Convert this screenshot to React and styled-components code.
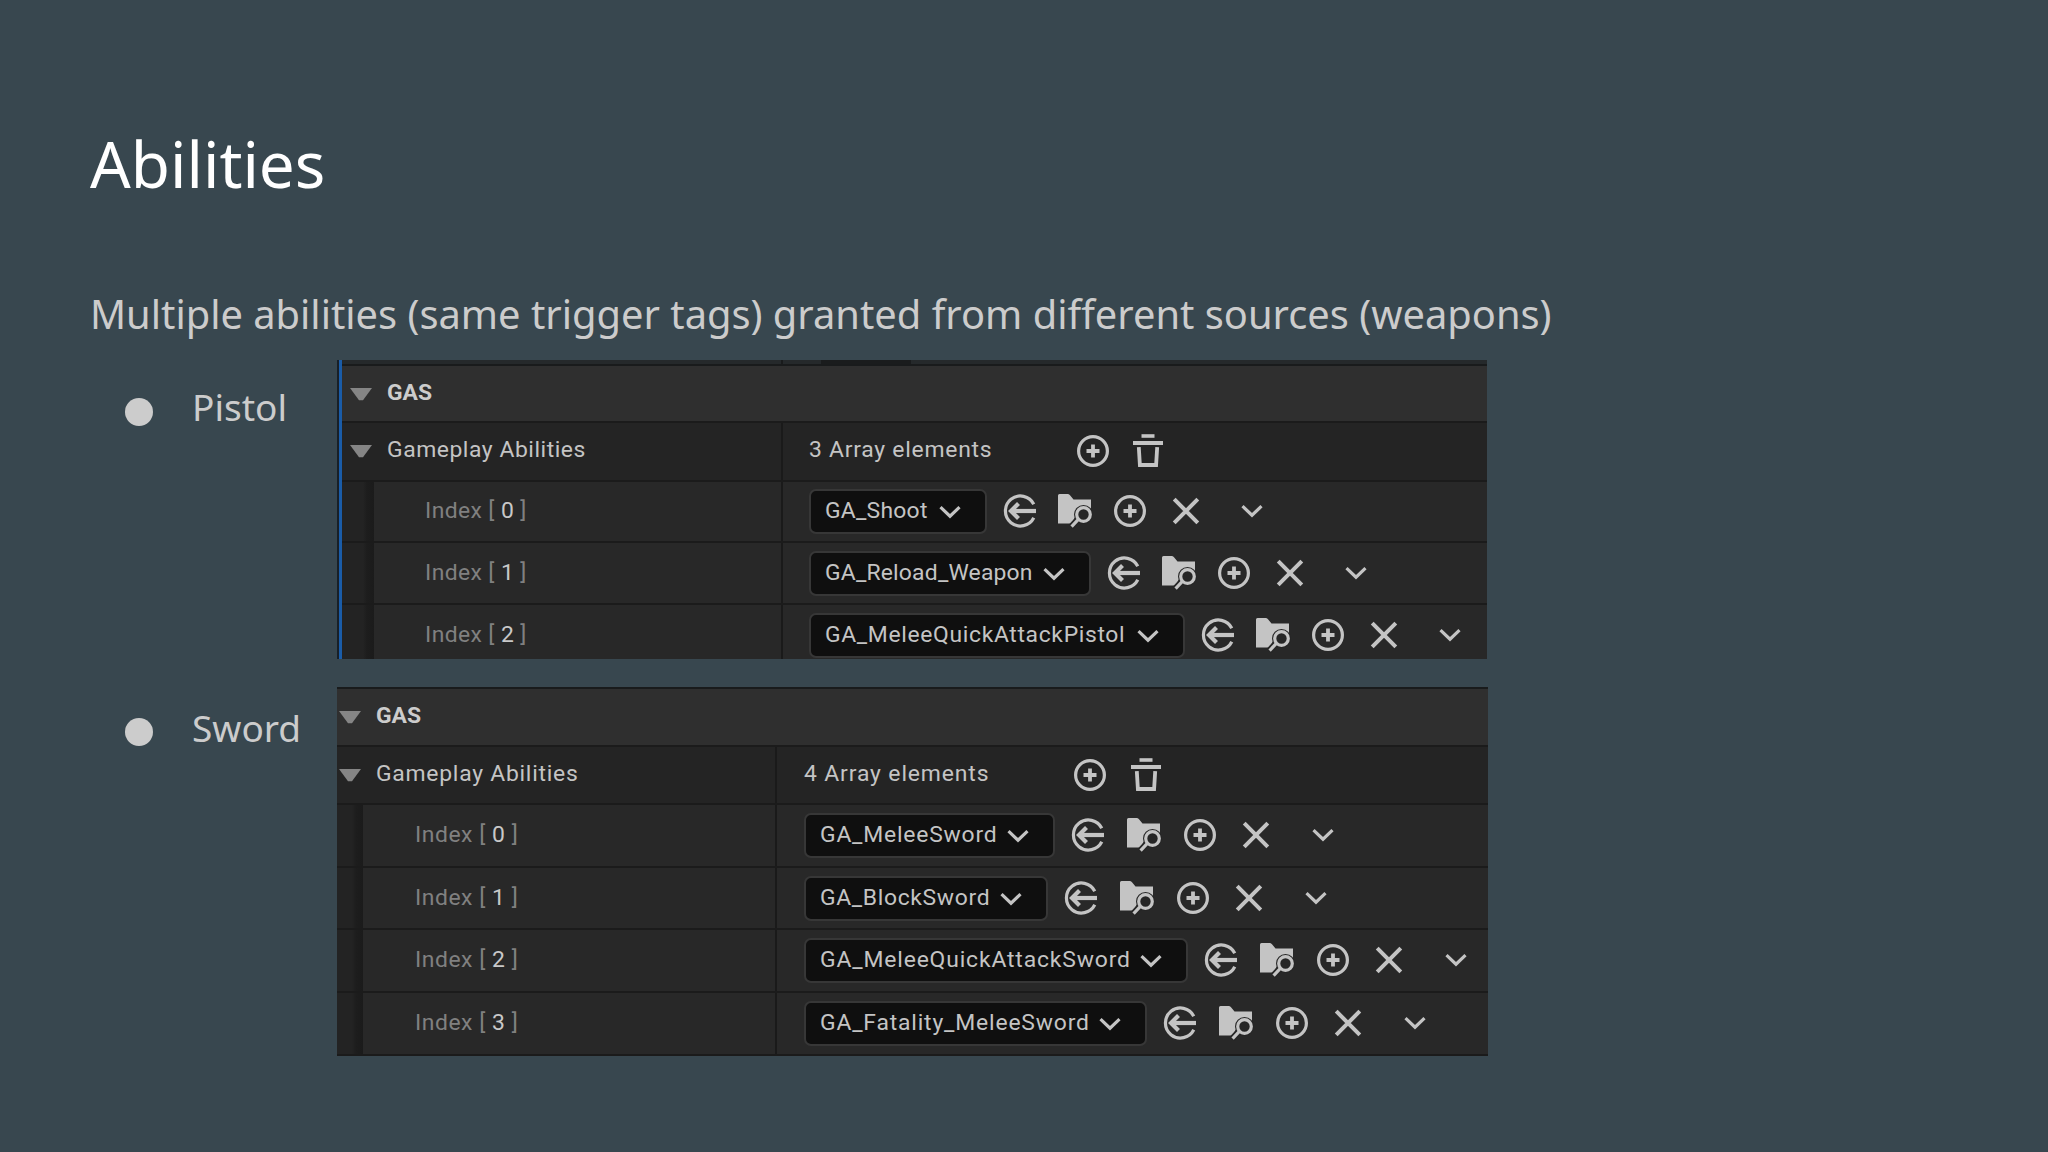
import React from 'react';
import styled, { createGlobalStyle } from 'styled-components';

const GlobalStyle = createGlobalStyle`
    body {
        margin: 0;
        background-color: #38474f;
    }
    * {
        box-sizing: border-box;
    }
`;

const Slide = styled.main`
    width: 2048px;
    height: 1152px;
    padding: 114px 90px 0;
    overflow: hidden;
    background-color: #38474f;
    font-family: 'Noto Sans', sans-serif;
    color: #cccccc;
`;

const Title = styled.h1`
    margin: 0;
    font-size: 63.8px;
    font-weight: 400;
    line-height: 100px;
    color: white;
`;

const Lead = styled.p`
    margin: 71px 0 0;
    height: 75px;
    font-size: 39.83px;
    line-height: 58px;
    white-space: nowrap;
`;

const List = styled.ul`
    margin: 0;
    padding: 0;
    display: flex;
    flex-direction: column;
    gap: 28px;
    list-style: none;
`;

const Item = styled.li`
    display: flex;
    align-items: flex-start;
    padding-left: 35px;
`;

const Bullet = styled.span`
    flex: none;
    width: 28px;
    height: 28px;
    margin-top: ${props => props.$top}px;
    border-radius: 50%;
    background-color: #cccccc;
`;

const Label = styled.span`
    width: 145px;
    margin: ${props => props.$top}px 0 0 39px;
    font-size: 37px;
    line-height: 54px;
`;

const Panel = styled.section`
    display: flex;
    flex-direction: column;
    width: ${props => props.$width}px;
    height: ${props => props.$height}px;
    overflow: hidden;
    border-left: ${props => (props.$selected ? '3px solid #1a5ca8' : 'none')};
    box-shadow: ${props => (props.$selected ? '-2px 0 0 #182028' : 'none')};
    margin-left: ${props => (props.$selected ? 2 : 0)}px;
    background-color: #262626;
    font-family: Roboto, sans-serif;
    font-size: 22.9px;
    line-height: 44px;
    color: #c4c4c4;
`;

const TopEdge = styled.div`
    display: flex;
    flex: none;
    height: ${props => props.$height}px;
    border-bottom: 2px solid #191b1c;
    background-color: #25292b;
`;

const EdgeCell = styled.div`
    width: ${props => props.$width}px;
    border-right: 2px solid #191b1c;
`;

const EdgeShade = styled.div`
    width: 90px;
    margin-left: 38px;
    background-color: #1a1c1d;
`;

const Row = styled.div`
    display: flex;
    flex: none;
    height: ${props => props.$height}px;
    border-bottom: 2px solid #1b1b1b;
    background-color: ${props => props.$bg || '#242424'};
`;

const NameCell = styled.div`
    display: flex;
    align-items: flex-start;
    flex: none;
    width: ${props => props.$width}px;
    padding: 6px 0 0 ${props => props.$left}px;
    border-right: ${props => (props.$plain ? 'none' : '2px solid #1a1a1a')};
`;

const Gutter = styled.div`
    flex: none;
    width: ${props => props.$width}px;
    background: linear-gradient(to right, #232323 0, #232323 calc(100% - 11px), #1d1d1d calc(100% - 7px), #1b1b1b 100%);
`;

const IndexCell = styled.div`
    flex: none;
    width: ${props => props.$width}px;
    padding: ${props => props.$top}px 0 0 ${props => props.$left}px;
    border-right: 2px solid #1a1a1a;
    color: #808080;
    letter-spacing: ${props => props.$spacing}px;
    white-space: pre;
`;

const IndexNumber = styled.span`
    color: #c8c8c8;
`;

const ValueCell = styled.div`
    display: flex;
    align-items: flex-start;
    padding: ${props => props.$top}px 0 0 ${props => props.$left}px;
`;

const Text = styled.span`
    margin-top: -1px;
    font-weight: ${props => (props.$bold ? 700 : 400)};
    color: ${props => (props.$bold ? '#cccccc' : '#c4c4c4')};
    letter-spacing: ${props => props.$spacing || 0}px;
    white-space: nowrap;
`;

const Count = styled(Text)`
    width: ${props => props.$width}px;
`;

const Combo = styled.div`
    display: flex;
    align-items: center;
    justify-content: space-between;
    flex: none;
    width: ${props => props.$width}px;
    height: 45px;
    padding: 0 24px 0 14px;
    border: 2px solid #373737;
    border-radius: 7px;
    background-color: #0f0f0f;
    white-space: nowrap;
    letter-spacing: ${props => props.$spacing || 0}px;
`;

const ComboText = styled.span`
    margin-top: -2px;
`;

const Tools = styled.div`
    display: flex;
    align-items: center;
    height: 44px;
    margin-left: ${props => props.$left || 0}px;
`;

const IconSlot = styled.div`
    display: flex;
    justify-content: center;
    width: ${props => props.$width}px;
`;

const Icon = styled.svg`
    display: block;
    flex: none;
    fill: none;
    stroke: #c4c4c4;
    stroke-width: 3.2;
`;

const Triangle = styled.svg`
    flex: none;
    width: 22px;
    height: 13px;
    margin: 16px 15px 0 0;
    fill: #858585;
`;

const Expander = () => (
    <Triangle viewBox='0 0 22 13'><path d='M0 0H22L13 12.3H9Z' /></Triangle>
);

const Chevron = () => (
    <Icon width='22' height='14' viewBox='0 0 22 14'><path d='M1.5 2.2L11 11.2L20.5 2.2' /></Icon>
);

const PlusIcon = () => (
    <Icon width='34' height='34' viewBox='0 0 34 34'>
        <circle cx='17' cy='17' r='14.4' />
        <path d='M10.5 17H23.5M17 10.5V23.5' strokeWidth='3.8' />
    </Icon>
);

const UseIcon = () => (
    <Icon width='34' height='34' viewBox='0 0 34 34'>
        <path d='M30.8 10.2A15 15 0 1 0 30.8 23.8' />
        <path d='M8 17H33' strokeWidth='4.2' />
        <path d='M15.5 9.5L8 17L15.5 24.5' strokeWidth='4.2' />
    </Icon>
);

const BrowseIcon = () => (
    <Icon width='36' height='36' viewBox='0 0 36 36'>
        <path d='M1 2.5Q1 1 2.5 1H10.5Q12 1 13 2.3L16.5 6.6H34V17H22L14.5 30.5H1Z' fill='#c4c4c4' stroke='none' />
        <circle cx='26.5' cy='21.5' r='7' fill='#262626' stroke='#262626' strokeWidth='5' />
        <path d='M21.5 26L14 34' stroke='#262626' strokeWidth='6.4' />
        <circle cx='26.5' cy='21.5' r='6.8' />
        <path d='M21.6 26.2L14.6 33.6' />
    </Icon>
);

const CloseIcon = () => (
    <Icon width='28' height='28' viewBox='0 0 28 28'><path d='M2.2 2.2L25.8 25.8M25.8 2.2L2.2 25.8' strokeWidth='4' /></Icon>
);

const TrashIcon = () => (
    <Icon width='34' height='34' viewBox='0 0 34 34'>
        <path d='M10.5 2H23.5' strokeWidth='3.6' />
        <path d='M2 9H32' strokeWidth='4' />
        <path d='M7.8 13.2L8.9 31H25.1L26.2 13.2' strokeWidth='3.8' />
    </Icon>
);

const panels = [
    {
        label: 'Pistol',
        bulletTop: 38,
        labelTop: 20,
        selected: true,
        width: 1148,
        height: 299,
        edge: 6,
        gas: 57,
        head: 59,
        arrow: 8,
        divider: 441,
        gutter: 32,
        indexLeft: 51,
        indexSpacing: 0.4,
        valueLeft: 26,
        nameSpacing: 0.55,
        count: '3 Array elements',
        countWidth: 256,
        countSpacing: 0.75,
        slot: 55.4,
        rows: [
            { height: 61, top: 7, name: 'GA_Shoot', width: 178, spacing: 0.25 },
            { height: 62, top: 8, name: 'GA_Reload_Weapon', width: 282, spacing: 0.2 },
            { height: 56, top: 8, name: 'GA_MeleeQuickAttackPistol', width: 376, spacing: 0.66 },
        ],
    },
    {
        label: 'Sword',
        bulletTop: 31,
        labelTop: 14,
        selected: false,
        width: 1151,
        height: 369,
        edge: 2,
        gas: 58,
        head: 58,
        arrow: 2,
        divider: 440,
        gutter: 26,
        indexLeft: 52,
        indexSpacing: 0.55,
        valueLeft: 27,
        nameSpacing: 0.75,
        count: '4 Array elements',
        countWidth: 258,
        countSpacing: 0.88,
        slot: 56.1,
        rows: [
            { height: 63, top: 8, name: 'GA_MeleeSword', width: 251, spacing: 0.8 },
            { height: 62, top: 8, name: 'GA_BlockSword', width: 244, spacing: 0.66 },
            { height: 63, top: 8, name: 'GA_MeleeQuickAttackSword', width: 384, spacing: 0.85 },
            { height: 63, top: 8, name: 'GA_Fatality_MeleeSword', width: 343, spacing: 0.83 },
        ],
    },
];

const ElementRow = ({ panel, row, index }) => (
    <Row $height={ row.height } $bg='#282828'>
        <Gutter $width={ panel.gutter } />
        <IndexCell
            $width={ panel.divider - panel.gutter }
            $left={ panel.indexLeft }
            $top={ row.top }
            $spacing={ panel.indexSpacing }
        >
            Index [ <IndexNumber>{ index }</IndexNumber> ]
        </IndexCell>
        <ValueCell $top={ row.top } $left={ panel.valueLeft }>
            <Combo $width={ row.width } $spacing={ row.spacing }>
                <ComboText>{ row.name }</ComboText>
                <Chevron />
            </Combo>
            <Tools $left={ 5 }>
                <IconSlot $width={ panel.slot }><UseIcon /></IconSlot>
                <IconSlot $width={ panel.slot }><BrowseIcon /></IconSlot>
                <IconSlot $width={ panel.slot }><PlusIcon /></IconSlot>
                <IconSlot $width={ panel.slot }><CloseIcon /></IconSlot>
                <IconSlot $width={ 77 }><Chevron /></IconSlot>
            </Tools>
        </ValueCell>
    </Row>
);

const DetailsPanel = ({ panel }) => (
    <Panel $width={ panel.width } $height={ panel.height } $selected={ panel.selected }>
        <TopEdge $height={ panel.edge }>
            { panel.selected && (
                <>
                    <EdgeCell $width={ panel.divider } />
                    <EdgeShade />
                </>
            ) }
        </TopEdge>
        <Row $height={ panel.gas } $bg='#2f2f2f'>
            <NameCell $width={ panel.divider } $left={ panel.arrow } $plain>
                <Expander />
                <Text $bold>GAS</Text>
            </NameCell>
        </Row>
        <Row $height={ panel.head }>
            <NameCell $width={ panel.divider } $left={ panel.arrow }>
                <Expander />
                <Text $spacing={ panel.nameSpacing }>Gameplay Abilities</Text>
            </NameCell>
            <ValueCell $top={ 6 } $left={ panel.valueLeft }>
                <Count $width={ panel.countWidth } $spacing={ panel.countSpacing }>{ panel.count }</Count>
                <Tools>
                    <IconSlot $width={ panel.slot }><PlusIcon /></IconSlot>
                    <IconSlot $width={ panel.slot }><TrashIcon /></IconSlot>
                </Tools>
            </ValueCell>
        </Row>
        { panel.rows.map( (row, index) => (
            <ElementRow key={ row.name } panel={ panel } row={ row } index={ index } />
        ) ) }
    </Panel>
);

const App = () => (
    <>
        <GlobalStyle />
        <Slide>
            <Title>Abilities</Title>
            <Lead>Multiple abilities (same trigger tags) granted from different sources (weapons)</Lead>
            <List>
                { panels.map( panel => (
                    <Item key={ panel.label }>
                        <Bullet $top={ panel.bulletTop } />
                        <Label $top={ panel.labelTop }>{ panel.label }</Label>
                        <DetailsPanel panel={ panel } />
                    </Item>
                ) ) }
            </List>
        </Slide>
    </>
);

export default App;
